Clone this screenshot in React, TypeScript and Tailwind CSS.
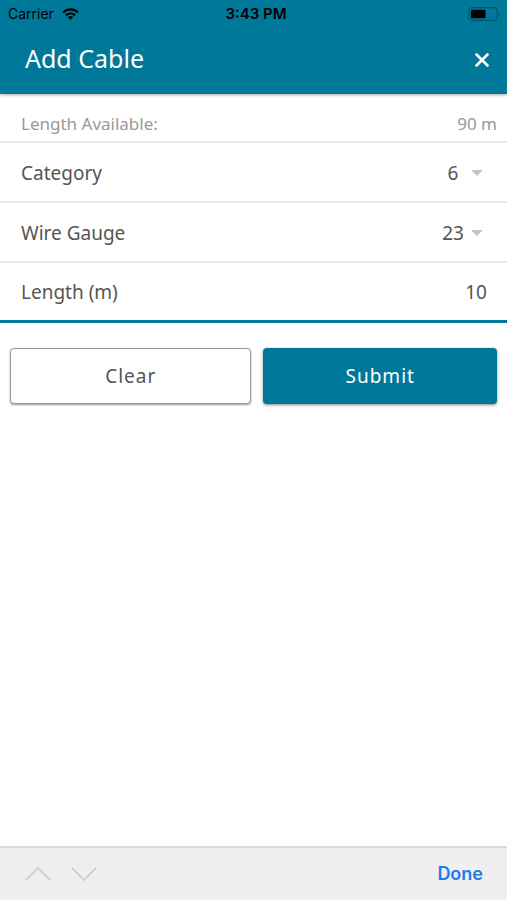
import { useState } from "react";
import type { FormEvent, ReactNode } from "react";

const categories = ["5", "6", "7"];
const gauges = ["22", "23", "24"];

export default function App() {
    const [category, setCategory] = useState("6");
    const [gauge, setGauge] = useState("23");
    const [length, setLength] = useState("10");

    const handleClear = () => {
        setCategory("6");
        setGauge("23");
        setLength("");
    };

    const handleSubmit = (e: FormEvent) => e.preventDefault();

    return (
        <div className="flex min-h-screen flex-col bg-white font-['Noto_Sans',sans-serif] text-[#555555]">
            <header className="z-10 bg-[#007899] shadow-[0_1px_3px_rgba(0,0,0,0.35)]">
                <StatusBar />
                <div className="flex h-[66px] items-center justify-between pr-4 pb-0.5 pl-[25px] text-white">
                    <h1 className="pb-0.5 text-[25px]">Add Cable</h1>
                    <button type="button" aria-label="Close" className="p-0.5">
                        <svg viewBox="0 0 14 14" className="size-[14px]" fill="none" stroke="currentColor" strokeWidth="2.6" strokeLinecap="round">
                            <path d="M1.5 1.5 12.5 12.5M12.5 1.5 1.5 12.5" />
                        </svg>
                    </button>
                </div>
            </header>

            <form onSubmit={handleSubmit} className="flex-1">
                <div className="flex h-[49px] items-center justify-between border-b-2 border-[#e8e8e8] pt-3 pr-[10px] pl-[21px] text-[17px] text-[#999999]">
                    <span>Length Available:</span>
                    <span>90 m</span>
                </div>

                <Row id="category" label="Category">
                    <Select id="category" value={category} options={categories} onChange={setCategory} />
                </Row>
                <Row id="gauge" label="Wire Gauge">
                    <Select id="gauge" value={gauge} options={gauges} onChange={setGauge} />
                </Row>
                <Row id="length" label="Length (m)" active>
                    <input
                        id="length"
                        inputMode="numeric"
                        value={length}
                        onChange={e => setLength(e.target.value)}
                        className="w-24 bg-transparent text-right outline-none"
                    />
                </Row>

                {/* Actions */}
                <div className="flex gap-3 px-[10px] pt-[25px]">
                    <button
                        type="button"
                        onClick={handleClear}
                        className="h-14 flex-[41] rounded-sm border border-[#999999] bg-white text-[19px] tracking-[1px] shadow-[0_1px_2px_rgba(0,0,0,0.4)]"
                    >
                        Clear
                    </button>
                    <button
                        type="submit"
                        className="h-14 flex-[40] rounded-sm bg-[#007899] text-[19px] tracking-[1px] text-white shadow-[0_1px_3px_rgba(0,0,0,0.5)]"
                    >
                        Submit
                    </button>
                </div>
            </form>

            <KeyboardBar />
        </div>
    );
}

function StatusBar() {
    return (
        <div className="grid h-7 grid-cols-3 items-center pr-[7px] pl-2 font-['Inter',sans-serif] text-sm text-black">
            <div className="flex items-center gap-2">
                <span>Carrier</span>
                <svg viewBox="0 0 18 13" className="h-3 w-[17px]" fill="none" stroke="currentColor" strokeWidth="2.3">
                    <path d="M1 4.8C5.6.4 12.4.4 17 4.8" />
                    <path d="M4 8C6.9 5.3 11.1 5.3 14 8" />
                    <path d="M9 12.8 6.1 9.9C7.8 8.4 10.2 8.4 11.9 9.9Z" fill="currentColor" stroke="none" />
                </svg>
            </div>
            <span className="pl-1 text-center text-[15px] font-semibold">3:43 PM</span>
            <svg viewBox="0 0 32 14" className="h-[14px] w-8 justify-self-end" fill="none">
                <rect x="1" y="0.7" width="28" height="12.6" rx="3" stroke="#00566e" strokeWidth="1.2" />
                <rect x="3" y="2.7" width="14.5" height="8.6" rx="1" fill="black" />
                <path d="M30.3 4.8C32 5.6 32 8.4 30.3 9.2Z" fill="#00566e" />
            </svg>
        </div>
    );
}

function Row({ id, label, active, children }: { id: string, label: string, active?: boolean, children: ReactNode }) {
    return (
        <div className={`flex h-[60px] items-center justify-between pt-0.5 pr-5 pl-[21px] text-[19px] ${active ? "border-b-[3px] border-[#007899]" : "border-b-2 border-[#e8e8e8]"}`}>
            <label htmlFor={id}>{label}</label>
            {children}
        </div>
    );
}

function Select({ id, value, options, onChange }: { id: string, value: string, options: string[], onChange: (value: string) => void }) {
    return (
        <div className="mr-1 flex items-center">
            <select
                id={id}
                value={value}
                onChange={e => onChange(e.target.value)}
                className="w-9 appearance-none bg-transparent text-center outline-none"
            >
                {options.map(option => <option key={option}>{option}</option>)}
            </select>
            <svg viewBox="0 0 12 6" className="h-1.5 w-3 fill-[#c4c4c4]">
                <path d="M0 0H12L6 6Z" />
            </svg>
        </div>
    );
}

function KeyboardBar() {
    return (
        <div className="flex h-[54px] items-center justify-between border-t-2 border-[#d9d9d9] bg-[#efeff0] pr-6 pl-[25px]">
            <div className="flex gap-5 text-[#d0d0d2]">
                <button type="button" aria-label="Previous field">
                    <svg viewBox="0 0 26 14" className="h-[14px] w-[26px]" fill="none" stroke="currentColor" strokeWidth="1.8">
                        <path d="M1 13 13 1 25 13" />
                    </svg>
                </button>
                <button type="button" aria-label="Next field">
                    <svg viewBox="0 0 26 14" className="h-[14px] w-[26px]" fill="none" stroke="currentColor" strokeWidth="1.8">
                        <path d="M1 1 13 13 25 1" />
                    </svg>
                </button>
            </div>
            <button type="button" className="font-['Inter',sans-serif] text-lg font-semibold text-[#1b7cec]">Done</button>
        </div>
    );
}
